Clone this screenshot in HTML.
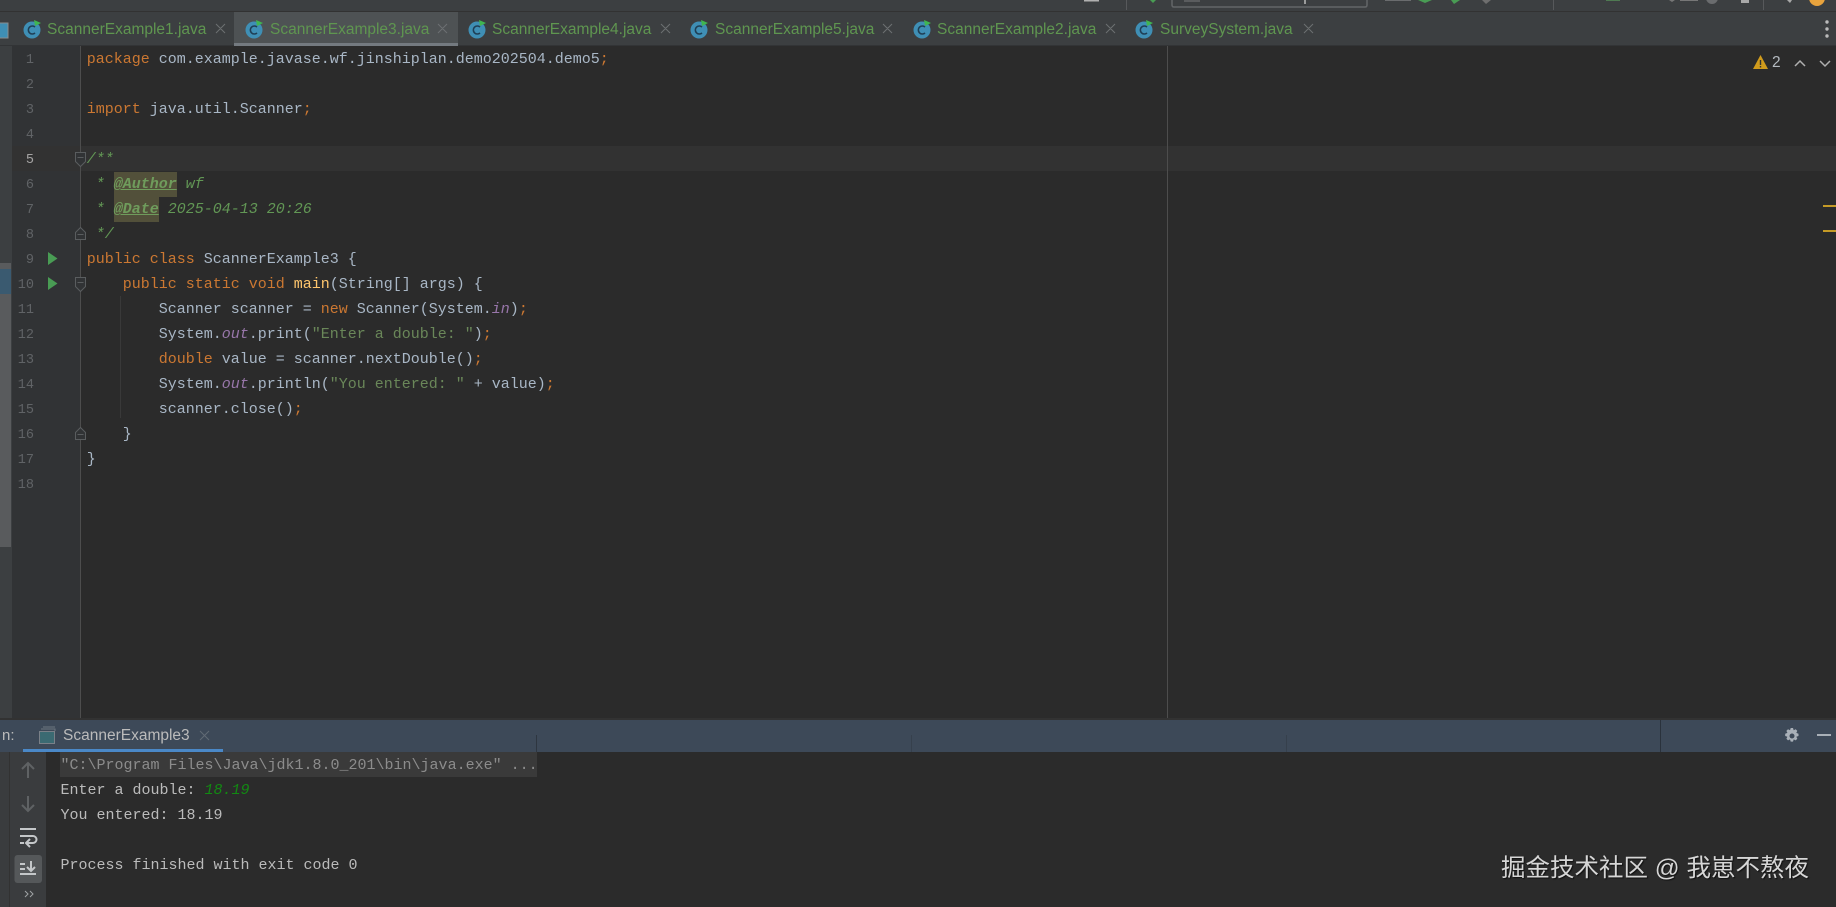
<!DOCTYPE html>
<html><head><meta charset="utf-8"><style>
html,body{margin:0;padding:0;background:#2b2b2b}
#r{position:relative;width:1836px;height:907px;overflow:hidden;background:#2b2b2b;font-family:"Liberation Sans",sans-serif}
#r div,#r svg{position:absolute}
.tt{top:19px;font-size:15.5px;line-height:22px;color:#5f9650;white-space:nowrap}
.l{left:86.7px;height:25px;font:15px/25px "Liberation Mono",monospace;color:#a9b7c6;white-space:pre;margin-top:1px}
.n{left:12px;width:22px;text-align:right;font:13.5px/25px "Liberation Mono",monospace;color:#606366;margin-top:1.5px}
.c{left:60.5px;font:15px/25px "Liberation Mono",monospace;color:#bbbbbb;white-space:pre}
b{font-weight:normal}
.k{color:#cc7832}.s{color:#6a8759}.st{color:#9876aa;font-style:italic}.f{color:#ffc66d}
.d{color:#629755;font-style:italic}
.t{display:inline-block;height:25px;color:#6f9c5c;font-style:italic;font-weight:bold;text-decoration:underline;background:#52503a}
</style></head><body><div id="r">
<div style="left:0;top:0;width:1836px;height:46px;background:#3c3f41"></div>
<div style="left:0;top:11px;width:1836px;height:1px;background:#323232"></div>
<div style="left:0;top:45px;width:1836px;height:1px;background:#323436"></div>
<svg style="left:0;top:0" width="1836" height="12" fill="none">
<g stroke="#57595b"><path d="M1126.500 0V10M1553.500 0V10M1763.500 0V10"/></g>
<path d="M1172 0v5q0 2 2 2h191q2 0 2-2V0" stroke="#636668" stroke-width="1.500"/>
<path d="M1305 0v4" stroke="#bbb" stroke-width="1.500"/>
<path d="M1084 0h15v1.500h-15z" fill="#b0b0b0"/><path d="M1150 0h6l-3 3z" fill="#499c54"/>
<path d="M1184 0h16v2h-16z" fill="#5a5c5e"/><path d="M1385 0h26v1h-26z" fill="#6a6c6e"/><path d="M1418 0h14l-7 3z" fill="#499c54"/>
<path d="M1451 0h9l-6 4z" fill="#499c54"/><path d="M1482 0h9l-5 4z" fill="#6e6e6e"/>
<path d="M1606 0h14v1h-14z" fill="#4f7a52"/><path d="M1669 0h6l-3 2zM1680 0h18v1h-18z" fill="#777"/>
<circle cx="1712" cy="-2" r="6" fill="#6a6c6e"/><path d="M1741 0h8v3h-8zM1787 0h5l-2 3z" fill="#a8a8a8"/>
<circle cx="1817" cy="-2" r="8" fill="#e8a33d"/>
</svg>
<div style="left:234px;top:12px;width:224px;height:34px;background:#4e5254"></div>
<div style="left:234px;top:43px;width:224px;height:3px;background:#747a80"></div>
<svg style="left:0;top:12px" width="1836" height="34">
<defs><g id="ci"><circle cx="0" cy="0" r="8.500" fill="#3f8fb5"/><path d="M3 -3a4 4 0 1 0 0 6" stroke="#1f3f55" stroke-width="1.600" fill="none"/><path d="M2 -10l7 3-6 3z" fill="#40b550"/></g></defs>
<rect x="-1" y="11" width="9" height="15" fill="#3f8fb5" stroke="#8a8c8e"/>
<use href="#ci" x="32" y="18"/><use href="#ci" x="254" y="18"/><use href="#ci" x="477" y="18"/><use href="#ci" x="699" y="18"/><use href="#ci" x="922" y="18"/><use href="#ci" x="1144" y="18"/>
<g fill="#bbb"><circle cx="1827" cy="10" r="1.700"/><circle cx="1827" cy="17" r="1.700"/><circle cx="1827" cy="24" r="1.700"/></g>
<g stroke="#6d7072" stroke-width="1"><path d="M216 12l9 9M225 12l-9 9M438 12l9 9M447 12l-9 9M661 12l9 9M670 12l-9 9M883 12l9 9M892 12l-9 9M1106 12l9 9M1115 12l-9 9M1304 12l9 9M1313 12l-9 9"/></g>
</svg>
<div class="tt" style="left:47px">ScannerExample1.java</div>
<div class="tt" style="left:270px">ScannerExample3.java</div>
<div class="tt" style="left:492px">ScannerExample4.java</div>
<div class="tt" style="left:715px">ScannerExample5.java</div>
<div class="tt" style="left:937px">ScannerExample2.java</div>
<div class="tt" style="left:1160px">SurveySystem.java</div>
<div style="left:0;top:46px;width:12px;height:674px;background:#3c3f41"></div>
<div style="left:0;top:263px;width:11px;height:284px;background:#595b5d"></div>
<div style="left:0;top:269px;width:11px;height:25px;background:#3a5a70"></div>
<div style="left:12px;top:46px;width:68px;height:672px;background:#313335"></div>
<div style="left:80px;top:146px;width:1756px;height:25px;background:#323232"></div>
<div style="left:12px;top:146px;width:68px;height:25px;background:#323232"></div>
<div style="left:80px;top:46px;width:1px;height:672px;background:#4d4d4d"></div>
<div style="left:1167px;top:46px;width:1px;height:672px;background:#4d4d4d"></div>
<div style="left:120px;top:296px;width:1px;height:122px;background:#393939"></div>
<div class="n" style="top:46px">1</div><div class="n" style="top:71px">2</div><div class="n" style="top:96px">3</div><div class="n" style="top:121px">4</div><div class="n" style="top:146px;color:#a4a3a3">5</div><div class="n" style="top:171px">6</div><div class="n" style="top:196px">7</div><div class="n" style="top:221px">8</div><div class="n" style="top:246px">9</div><div class="n" style="top:271px">10</div><div class="n" style="top:296px">11</div><div class="n" style="top:321px">12</div><div class="n" style="top:346px">13</div><div class="n" style="top:371px">14</div><div class="n" style="top:396px">15</div><div class="n" style="top:421px">16</div><div class="n" style="top:446px">17</div><div class="n" style="top:471px">18</div>
<svg style="left:0;top:46px" width="100" height="460">
<path d="M48 206l9.500 6.500-9.500 6.500zM48 231l9.500 6.500-9.500 6.500z" fill="#499c54"/>
<g stroke="#5a5d5f" fill="#313335"><path d="M75.500 106.500h10v9l-5 5-5-5zM75.500 193.500h10v-7l-5-5-5 5zM75.500 231.500h10v9l-5 5-5-5zM75.500 393.500h10v-7l-5-5-5 5z"/><path d="M77.500 111.500h6M77.500 188.500h6M77.500 236.500h6M77.500 388.500h6"/></g>
</svg>
<div class="l" style="top:46px"><b class="k">package</b> com.example.javase.wf.jinshiplan.demo202504.demo5<b class="k">;</b></div>
<div class="l" style="top:96px"><b class="k">import</b> java.util.Scanner<b class="k">;</b></div>
<div class="l" style="top:146px;color:#629755;font-style:italic">/**</div>
<div class="l" style="top:171px"><b class="d"> * </b><b class="t">@Author</b><b class="d"> wf</b></div>
<div class="l" style="top:196px"><b class="d"> * </b><b class="t">@Date</b><b class="d"> 2025-04-13 20:26</b></div>
<div class="l" style="top:221px;color:#629755;font-style:italic"> */</div>
<div class="l" style="top:246px"><b class="k">public class</b> ScannerExample3 {</div>
<div class="l" style="top:271px">    <b class="k">public static void</b> <b class="f">main</b>(String[] args) {</div>
<div class="l" style="top:296px">        Scanner scanner = <b class="k">new</b> Scanner(System.<b class="st">in</b>)<b class="k">;</b></div>
<div class="l" style="top:321px">        System.<b class="st">out</b>.print(<b class="s">"Enter a double: "</b>)<b class="k">;</b></div>
<div class="l" style="top:346px">        <b class="k">double</b> value = scanner.nextDouble()<b class="k">;</b></div>
<div class="l" style="top:371px">        System.<b class="st">out</b>.println(<b class="s">"You entered: "</b> + value)<b class="k">;</b></div>
<div class="l" style="top:396px">        scanner.close()<b class="k">;</b></div>
<div class="l" style="top:421px">    }</div>
<div class="l" style="top:446px">}</div>
<svg style="left:1750px;top:46px" width="86" height="190" fill="none">
<path d="M10.500 9l7.500 14h-15z" fill="#d09b1c"/><path d="M10.500 14v5M10.500 20v1.500" stroke="#333" stroke-width="1.400"/>
<path d="M45 20l5-5 5 5M70 15l5 5 5-5" stroke="#b0b0b0" stroke-width="1.500"/>
<path d="M73 159h13v2h-13zM73 184h13v2h-13z" fill="#c59a26"/>
</svg>
<div style="left:1772px;top:51px;font-size:15.500px;line-height:24px;color:#b4bac0">2</div>
<div style="left:0;top:718px;width:1836px;height:2px;background:#323232"></div>
<div style="left:0;top:720px;width:1836px;height:32px;background:#3d4958"></div>
<div style="left:23px;top:749px;width:200px;height:3px;background:#4a88c7"></div>
<div style="left:536px;top:735px;width:1px;height:17px;background:#2e3640"></div>
<div style="left:911px;top:735px;width:1px;height:17px;background:#36404c"></div>
<div style="left:1286px;top:735px;width:1px;height:17px;background:#36404c"></div>
<div style="left:1660px;top:720px;width:1px;height:32px;background:#2a323c"></div>
<div style="left:2px;top:725px;font-size:15px;line-height:22px;color:#bbb">n:</div>
<div style="left:63px;top:725px;font-size:15.500px;line-height:22px;color:#bbb;white-space:nowrap">ScannerExample3</div>
<svg style="left:0;top:720px" width="1836" height="32" fill="none">
<rect x="39.500" y="11.500" width="15" height="12" fill="#3b6a72" stroke="#7a8088"/><path d="M41 9h14v2M43 7h12" stroke="#6d7680"/>
<path d="M200 11l9 9M209 11l-9 9" stroke="#616a75"/>
<g transform="translate(-1 1)"><path d="M1792 7l2 0 .700 2.200 2-.900 1.600 1.600-1 2 2.200.800v2.300l-2.200.800 1 2-1.600 1.600-2-1-.700 2.200h-2.300l-.700-2.200-2 1-1.600-1.600 1-2-2.200-.800v-2.300l2.200-.800-1-2 1.600-1.600 2 .900.700-2.200z" fill="#a9b0b8"/><circle cx="1793" cy="15" r="2.500" fill="#3d4958"/></g>
<path d="M1817 15h14" stroke="#a9b0b8" stroke-width="2"/>
</svg>
<div style="left:0;top:752px;width:46px;height:155px;background:#3a3c3e"></div>
<div style="left:9px;top:752px;width:1px;height:155px;background:#323232"></div>
<svg style="left:0;top:752px" width="46" height="155" fill="none">
<rect x="14.500" y="103" width="27.500" height="28" rx="3" fill="#55585a"/>
<g stroke="#5f6264" stroke-width="2"><path d="M28 26V11M22 17l6-6 6 6M28 44v15M22 53l6 6 6-6"/></g>
<g stroke="#c4c7c9" stroke-width="2"><path d="M20 77h16M20 84h13a3.500 3.500 0 0 1 0 7h-6M30 87l-4 4 4 4M20 91h4"/>
<path d="M20 112h5M20 117h5M20 122h16M31 109v10M27 115l4 4 4-4"/></g>
<path d="M25 139l3 3-3 3M30 139l3 3-3 3" stroke="#a0a3a5"/>
</svg>
<div style="left:60px;top:752px;width:477px;height:25px;background:#3a3a3a"></div>
<div class="c" style="top:752.500px;color:#8c8c8c">"C:\Program Files\Java\jdk1.8.0_201\bin\java.exe" ...</div>
<div class="c" style="top:777.500px">Enter a double: <b style="color:#128a12;font-style:italic">18.19</b></div>
<div class="c" style="top:802.500px">You entered: 18.19</div>
<div class="c" style="top:852.500px">Process finished with exit code 0</div>
<div style="left:1501px;top:853px;font:24.500px/32px 'Liberation Sans','Noto Sans CJK SC',sans-serif;color:#d6d6d6;text-shadow:1px 1px 1px #111;white-space:nowrap">掘金技术社区 @ 我崽不熬夜</div>
</div></body></html>
